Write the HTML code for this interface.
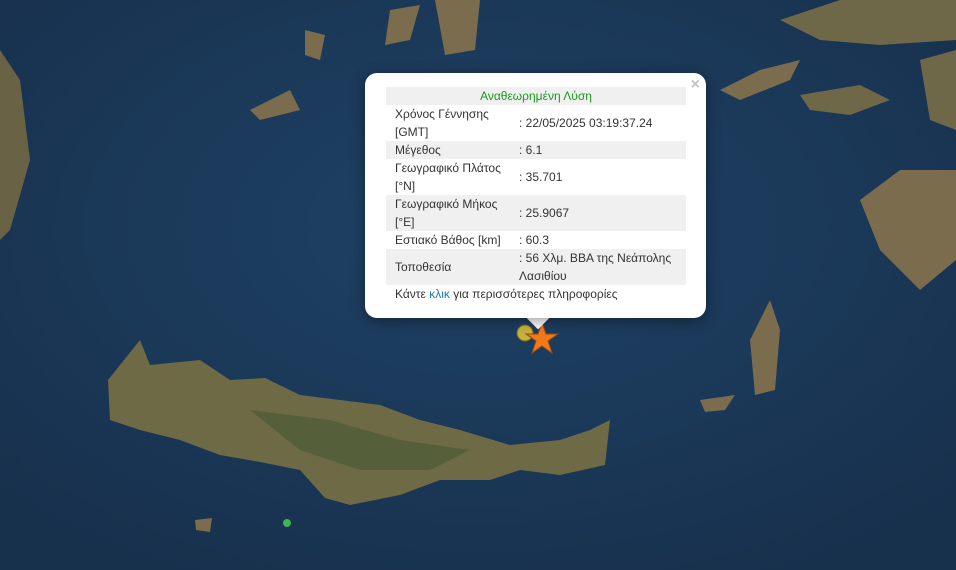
<!DOCTYPE html>
<html><head><meta charset="utf-8"><style>
body{margin:0;width:956px;height:570px;overflow:hidden;position:relative;background:#1c3855;font-family:"Liberation Sans",sans-serif}
svg{position:absolute;left:0;top:0}
.pop{position:absolute;left:365px;top:73px;width:341px;height:245px;background:#fff;border-radius:12px;box-shadow:0 3px 14px rgba(0,0,0,.4)}
.tip{position:absolute;left:530px;top:310px;width:16px;height:16px;background:#fff;transform:rotate(45deg)}
.x{position:absolute;right:6px;top:3px;color:#c3c3c3;font:bold 16px "Liberation Sans",sans-serif}
table{position:absolute;left:21px;top:14px;width:300px;border-collapse:collapse;font-size:12px;color:#333;line-height:18px;table-layout:fixed}
td{padding:0 0 0 9px;vertical-align:middle}
tr.g td{background:#f0f0f0}
td.v{padding-left:0}
.f{position:absolute;left:30px;top:214px;font-size:12px;color:#333}
</style></head><body>
<svg width="956" height="570">
<defs><radialGradient id="o" cx="50%" cy="40%" r="70%"><stop offset="0" stop-color="#1f4266"/><stop offset="1" stop-color="#17304c"/></radialGradient></defs>
<rect width="956" height="570" fill="url(#o)"/>
<path d="M108,380 L140,340 L150,365 L200,360 L230,380 L265,378 L300,395 L340,400 L380,405 L420,420 L460,430 L510,445 L560,440 L590,430 L610,420 L605,465 L560,475 L520,470 L490,480 L440,480 L400,495 L350,505 L325,498 L300,470 L260,462 L220,455 L180,440 L140,430 L110,420 Z" fill="#6e6a45"/>
<path d="M250,410 L330,420 L400,440 L470,450 L430,470 L360,470 L300,450 Z" fill="#55603a"/>
<path d="M0,50 L20,80 L30,160 L10,230 L0,240 Z" fill="#6a6244"/>
<path d="M860,200 L900,170 L956,170 L956,260 L920,290 L880,250 Z" fill="#7a6c4c"/>
<path d="M750,340 L770,300 L780,330 L775,390 L755,395 Z" fill="#7a6c4c"/>
<path d="M720,90 L760,70 L800,60 L790,80 L740,100 Z" fill="#7a6c4c"/>
<path d="M800,95 L860,85 L890,100 L850,115 L810,110 Z" fill="#6f6848"/>
<path d="M780,20 L840,0 L956,0 L956,40 L880,45 L820,40 Z" fill="#6f6848"/>
<path d="M920,60 L956,50 L956,130 L930,120 Z" fill="#6f6848"/>
<path d="M435,0 L480,0 L475,50 L445,55 Z" fill="#7a6c4c"/>
<path d="M390,10 L420,5 L410,40 L385,45 Z" fill="#7a6c4c"/>
<path d="M250,110 L290,90 L300,110 L260,120 Z" fill="#7a6c4c"/>
<path d="M305,30 L325,35 L320,60 L305,55 Z" fill="#7a6c4c"/>
<path d="M700,400 L735,395 L725,410 L705,412 Z" fill="#7a6c4c"/>
<path d="M195,520 L212,518 L210,532 L196,530 Z" fill="#7a6c4c"/>
<circle cx="525" cy="333" r="8" fill="#c8b23c" stroke="#7a6a20"/>
<circle cx="287" cy="523" r="4" fill="#3fb34f"/>
<path d="M542,322 L546,334 L558,334 L548,341 L552,353 L542,346 L532,353 L536,341 L526,334 L538,334 Z" fill="#f07a1a" stroke="#9a4a10"/>
</svg>
<div class="tip"></div>
<div class="pop"><div class="x">×</div>
<table>
<colgroup><col style="width:133px"><col style="width:167px"></colgroup>
<tr class="g"><td colspan="2" style="text-align:center;color:#1a9a1a;padding:0">Αναθεωρημένη Λύση</td></tr>
<tr><td>Χρόνος Γέννησης<br>[GMT]</td><td class="v">: 22/05/2025 03:19:37.24</td></tr>
<tr class="g"><td>Μέγεθος</td><td class="v">: 6.1</td></tr>
<tr><td>Γεωγραφικό Πλάτος<br>[°N]</td><td class="v">: 35.701</td></tr>
<tr class="g"><td>Γεωγραφικό Μήκος<br>[°E]</td><td class="v">: 25.9067</td></tr>
<tr><td>Εστιακό Βάθος [km]</td><td class="v">: 60.3</td></tr>
<tr class="g"><td>Τοποθεσία</td><td class="v">: 56 Χλμ. ΒΒΑ της Νεάπολης Λασιθίου</td></tr>
</table>
<div class="f">Κάντε <span style="color:#1a7ab0">κλικ</span> για περισσότερες πληροφορίες</div>
</div>
</body></html>
